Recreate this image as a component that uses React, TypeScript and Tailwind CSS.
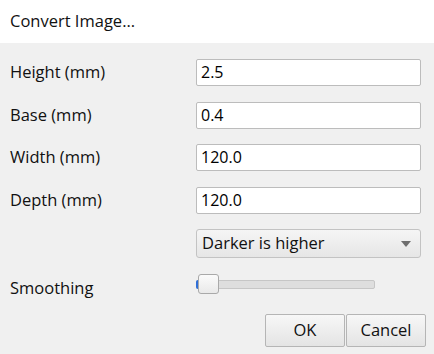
const font = { fontFamily: '"Open Sans", "Noto Sans", sans-serif' };

function Field({ label, value, top }: { label: string; value: string; top: string }) {
  return (
    <div className={`flex items-center ${top}`}>
      <div className="w-[196px] pl-[10px] text-[16.5px] text-[#111]">{label}</div>
      <div className="h-[27px] w-[225px] rounded-[2px] border border-[#bcbcbc] bg-white pl-[4px] text-[16px] leading-[25px] text-black">
        {value}
      </div>
    </div>
  );
}

export default function App() {
  return (
    <div className="h-[354px] w-[434px] overflow-hidden bg-[#f0f0f0]" style={font}>
      <div className="flex h-[43px] items-center bg-white pl-[10px] text-[16.5px] text-[#111]">
        Convert Image...
      </div>

      <Field label="Height (mm)" value="2.5" top="mt-[16px]" />
      <Field label="Base (mm)" value="0.4" top="mt-[16px]" />
      <Field label="Width (mm)" value="120.0" top="mt-[15px]" />
      <Field label="Depth (mm)" value="120.0" top="mt-[16px]" />

      <div className="mt-[15px] flex">
        <div className="w-[196px]" />
        <div className="flex h-[29px] w-[225px] items-center justify-between rounded-[3px] border border-[#c3c3c3] bg-gradient-to-b from-[#f5f5f5] to-[#e6e6e6] pl-[5px] pr-[9px] text-[16.5px] text-[#111]">
          <span>Darker is higher</span>
          <span className="h-0 w-0 border-x-[5px] border-t-[6px] border-x-transparent border-t-[#6e6e6e]" />
        </div>
      </div>

      <div className="mt-[15px] flex h-[22px] items-center">
        <div className="mt-[8px] w-[196px] pl-[10px] text-[16.5px] text-[#111]">Smoothing</div>
        <div className="relative h-[20px] w-[179px]">
          <div className="absolute left-0 top-[6px] h-[9px] w-full rounded-[2px] border border-[#c6c6c6] bg-[#dedede]" />
          <div className="absolute left-0 top-[6px] h-[9px] w-[4px] rounded-l-[2px] bg-[#2f6fd8]" />
          <div className="absolute left-[2px] top-0 h-[20px] w-[21px] rounded-[3px] border border-[#a9a9a9] bg-gradient-to-b from-[#fbfbfb] to-[#e9e9e9]" />
        </div>
      </div>

      <div className="mt-[19px] flex justify-end pr-[8px]">
        <button className="h-[33px] w-[80px] rounded-[2px] border border-[#b5b5b5] bg-gradient-to-b from-[#f7f7f7] to-[#e4e4e4] text-[16.5px] text-[#111]">
          OK
        </button>
        <button className="ml-[1px] h-[33px] w-[80px] rounded-[2px] border border-[#b5b5b5] bg-gradient-to-b from-[#f7f7f7] to-[#e4e4e4] text-[16.5px] text-[#111]">
          Cancel
        </button>
      </div>
    </div>
  );
}
